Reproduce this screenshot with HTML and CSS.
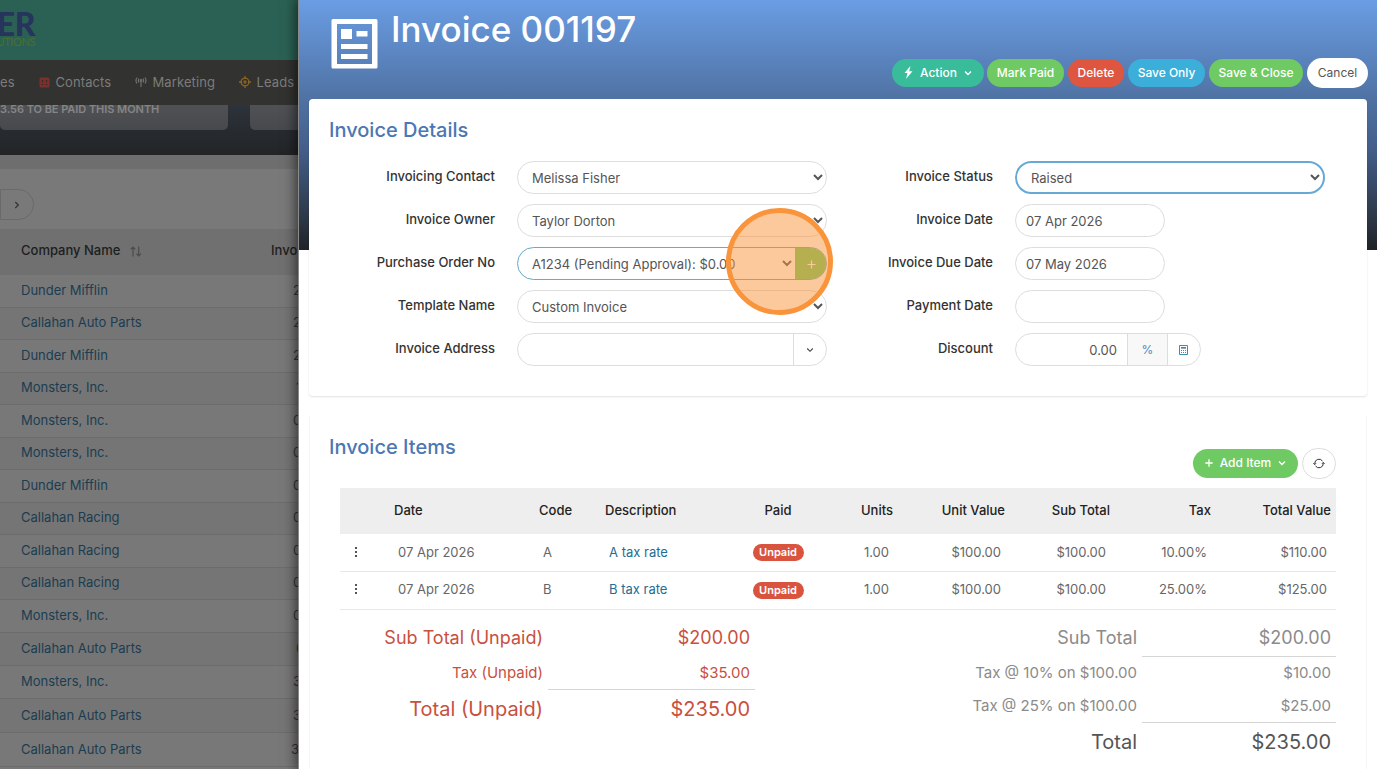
FILE: index.html
```html
<!DOCTYPE html>
<html lang="en">
<head>
    <meta charset="utf-8">
    <title>Invoice 001197</title>
    <meta name="viewport" content="width=device-width, initial-scale=1">
    <link rel="stylesheet" href="styles.css">
</head>
<body>
    <div class="page">
        <header class="brand">
            <div class="logo">ER</div>
            <div class="logo-sub">UTIONS</div>
        </header>
        <nav class="nav">
            <span class="nav-item sales">es</span>
            <span class="nav-item contacts">
                <svg width="11" height="11" viewBox="0 0 11 11"><rect x="0.5" y="0.5" width="10" height="10" rx="1.5" fill="#7c302b"/><path d="M3.5 3v2.2M7.5 3v2.2M2.5 7.5h2M6.5 7.5h2" stroke="#3a2a28" stroke-width="1.2"/></svg>
                Contacts
            </span>
            <span class="nav-item marketing">
                <svg width="12" height="12" viewBox="0 0 12 12" fill="none" stroke="#707070" stroke-width="1.2"><path d="M2 1.5Q0 4.5 2 7.5M4 2.5Q2.8 4.5 4 6.5M10 1.5Q12 4.5 10 7.5M8 2.5Q9.2 4.5 8 6.5M6 5v6"/><circle cx="6" cy="4.5" r="0.8"/></svg>
                Marketing
            </span>
            <span class="nav-item leads">
                <svg width="12" height="12" viewBox="0 0 12 12" fill="none" stroke="#8a6420" stroke-width="1.3"><circle cx="6" cy="6" r="3.9"/><circle cx="6" cy="6" r="1"/><path d="M6 0v3M6 9v3M0 6h3M9 6h3"/></svg>
                Leads
            </span>
        </nav>
        <section class="stats">
            <div class="stat">3.56 TO BE PAID THIS MONTH</div>
            <div class="stat"></div>
        </section>
        <div class="gap"></div>
        <div class="pager"><span class="pager-next"><svg width="6" height="8" viewBox="0 0 6 8" fill="none" stroke="#333" stroke-width="1.2"><path d="M1.3 1l3 3-3 3"/></svg></span></div>
        <div class="list">
            <div class="list-head">
                <span>Company Name <svg width="12" height="11" viewBox="0 0 12 11" fill="none" stroke="#4c4c4c" stroke-width="1.2"><path d="M3 10.5V1M.7 3.3L3 1l2.3 2.3M8.7 .5V10M6.4 7.7L8.7 10 11 7.7"/></svg></span>
                <span class="inv-head">Invo</span>
            </div>
            <div class="list-row"><a>Dunder Mifflin</a><span>2</span></div>
            <div class="list-row"><a>Callahan Auto Parts</a><span>2</span></div>
            <div class="list-row"><a>Dunder Mifflin</a><span>2</span></div>
            <div class="list-row"><a>Monsters, Inc.</a><span class="far">1</span></div>
            <div class="list-row"><a>Monsters, Inc.</a><span>0</span></div>
            <div class="list-row"><a>Monsters, Inc.</a><span>0</span></div>
            <div class="list-row"><a>Dunder Mifflin</a><span>0</span></div>
            <div class="list-row"><a>Callahan Racing</a><span>0</span></div>
            <div class="list-row"><a>Callahan Racing</a><span>0</span></div>
            <div class="list-row"><a>Callahan Racing</a><span>0</span></div>
            <div class="list-row tall"><a>Monsters, Inc.</a><span>0</span></div>
            <div class="list-row tall"><a>Callahan Auto Parts</a><span class="far">0</span></div>
            <div class="list-row tall"><a>Monsters, Inc.</a><span>3</span></div>
            <div class="list-row taller"><a>Callahan Auto Parts</a><span>3</span></div>
            <div class="list-row taller"><a>Callahan Auto Parts</a><span class="near">3</span></div>
        </div>
    </div>

    <main class="drawer">
        <header class="drawer-head">
            <svg class="doc-icon" width="47" height="51" viewBox="0 0 47 51"><path fill="#fff" fill-rule="evenodd" d="M2 1h43a1.5 1.5 0 0 1 1.5 1.5v46.500a1.500 1.500 0 0 1-1.500 1.500H2A1.500 1.500 0 0 1 .5 49V2.500A1.500 1.500 0 0 1 2 1zM6 6v40h35V6zM10 11h11v10H10zM25.500 13H36.500v5.500H25.500zM10 26h26.500v5H10zM10 36h26.500v5H10z"/></svg>
            <h1>Invoice 001197</h1>
            <div class="buttons">
                <button class="btn teal">
                    <svg width="9" height="13" viewBox="0 0 9 13"><path fill="#fff" d="M6.500 0L.5 7h3L2 13l6.500-7.700H5.200z"/></svg>
                    Action
                    <svg class="caret" width="8" height="6" viewBox="0 0 8 6" fill="none" stroke="#fff" stroke-width="1.4"><path d="M1 1.500l3 3 3-3"/></svg>
                </button>
                <button class="btn green">Mark Paid</button>
                <button class="btn red">Delete</button>
                <button class="btn blue">Save Only</button>
                <button class="btn green close">Save &amp; Close</button>
                <button class="btn white">Cancel</button>
            </div>
        </header>

        <section class="panel details">
            <h2>Invoice Details</h2>
            <div class="form">
                <div class="col">
                    <div class="field"><label>Invoicing Contact</label><select><option>Melissa Fisher</option></select></div>
                    <div class="field"><label>Invoice Owner</label><select><option>Taylor Dorton</option></select></div>
                    <div class="field">
                        <label>Purchase Order No</label>
                        <div class="group order">
                            <select><option>A1234 (Pending Approval): $0.00</option></select>
                            <button class="add"><svg width="9" height="9" viewBox="0 0 9 9" stroke="#fff" stroke-width="1.2"><path d="M4.500 .5v8M.5 4.500h8"/></svg></button>
                        </div>
                        <div class="click-marker"></div>
                    </div>
                    <div class="field"><label>Template Name</label><select><option>Custom Invoice</option></select></div>
                    <div class="field">
                        <label>Invoice Address</label>
                        <div class="group address">
                            <input type="text">
                            <span class="addon"><svg width="8" height="6" viewBox="0 0 8 6" fill="none" stroke="#444" stroke-width="1.1"><path d="M1.200 1.500L4 4.300l2.800-2.800"/></svg></span>
                        </div>
                    </div>
                </div>
                <div class="col">
                    <div class="field"><label>Invoice Status</label><select class="focused"><option>Raised</option></select></div>
                    <div class="field"><label>Invoice Date</label><input class="date" type="text" value="07 Apr 2026"></div>
                    <div class="field"><label>Invoice Due Date</label><input class="date" type="text" value="07 May 2026"></div>
                    <div class="field"><label>Payment Date</label><input class="date" type="text"></div>
                    <div class="field">
                        <label>Discount</label>
                        <div class="group discount">
                            <input type="text" value="0.00">
                            <span class="percent">%</span>
                            <span class="addon"><svg width="9" height="10" viewBox="0 0 9 10" fill="none" stroke="#3a8cba"><path d="M.5.5h8v9h-8zM2 2.500h5M2 3.200h5"/><path stroke-dasharray="1 1" d="M2 5.500h5M2 7.500h5"/></svg></span>
                        </div>
                    </div>
                </div>
            </div>
        </section>

        <section class="panel items">
            <h2>Invoice Items</h2>
            <div class="items-actions">
                <button class="btn green add-item">
                    <svg width="8" height="8" viewBox="0 0 8 8" stroke="#fff" stroke-width="1.3"><path d="M4 .3v7.400M.3 4h7.400"/></svg>
                    Add Item
                    <svg class="caret" width="8" height="6" viewBox="0 0 8 6" fill="none" stroke="#fff" stroke-width="1.3"><path d="M1 1.500l3 3 3-3"/></svg>
                </button>
                <button class="refresh"><svg width="12" height="11" viewBox="0 0 12 11" fill="none" stroke="#333" stroke-width="1"><path d="M1.700 6.300V5.500a4.300 4.300 0 0 1 7.800-2.500M10.300 4.700v.8a4.300 4.300 0 0 1-7.800 2.500"/><path d="M.4 5.200l1.300 1.400L3 5.200M9 5.800l1.300-1.400 1.300 1.400"/></svg></button>
            </div>
            <div class="table">
                <div class="tr th"><span></span><span>Date</span><span>Code</span><span>Description</span><span class="c">Paid</span><span class="r">Units</span><span class="r">Unit Value</span><span class="r">Sub Total</span><span class="r">Tax</span><span class="r">Total Value</span></div>
                <div class="tr"><span class="dots"><i></i><i></i><i></i></span><span>07 Apr 2026</span><span>A</span><span><a>A tax rate</a></span><span class="c"><b class="badge">Unpaid</b></span><span class="r">1.00</span><span class="r">$100.00</span><span class="r">$100.00</span><span class="r">10.00%</span><span class="r">$110.00</span></div>
                <div class="tr second"><span class="dots"><i></i><i></i><i></i></span><span>07 Apr 2026</span><span>B</span><span><a>B tax rate</a></span><span class="c"><b class="badge">Unpaid</b></span><span class="r">1.00</span><span class="r">$100.00</span><span class="r">$100.00</span><span class="r">25.00%</span><span class="r">$125.00</span></div>
            </div>
            <div class="totals">
                <div class="sum unpaid">
                    <div class="line sub"><span>Sub Total (Unpaid)</span><span>$200.00</span></div>
                    <div class="line tax ruled"><span>Tax (Unpaid)</span><span>$35.00</span></div>
                    <div class="line total"><span>Total (Unpaid)</span><span>$235.00</span></div>
                </div>
                <div class="sum all">
                    <div class="line sub ruled"><span>Sub Total</span><span>$200.00</span></div>
                    <div class="line tax"><span>Tax @ 10% on $100.00</span><span>$10.00</span></div>
                    <div class="line tax ruled"><span>Tax @ 25% on $100.00</span><span>$25.00</span></div>
                    <div class="line total"><span>Total</span><span>$235.00</span></div>
                </div>
            </div>
        </section>
    </main>
</body>
</html>
```
FILE: styles.css
```css
* {
    box-sizing: border-box;
}

body {
    margin: 0;
    height: 769px;
    display: flex;
    overflow: hidden;
    font-family: Inter, "Liberation Sans", sans-serif;
    font-size: 13px;
    color: #555;
    background-color: #fff;
}

button, input, select {
    font-family: inherit;
    font-size: 13px;
}

svg {
    flex: none;
}

/* dimmed list page on the left */
.page {
    width: 298px;
    flex: none;
    overflow: hidden;
    background-color: #787878;
}

.brand {
    height: 60px;
    padding-top: 11px;
    background-color: #2b6154;
}

.logo {
    font-family: Lato, sans-serif;
    font-size: 32px;
    font-weight: 900;
    line-height: 25px;
    letter-spacing: -0.5px;
    width: 35px;
    color: #27345c;
    display: flex;
    justify-content: flex-end;
}

.logo-sub {
    font-family: Lato, sans-serif;
    font-size: 11px;
    line-height: 11px;
    letter-spacing: -0.4px;
    width: 35px;
    color: #4a6f31;
    display: flex;
    justify-content: flex-end;
}

.nav {
    height: 45px;
    display: flex;
    align-items: center;
    padding-bottom: 1px;
    background-color: #323230;
    color: #7c7c7b;
    letter-spacing: 0.1px;
    white-space: nowrap;
}

.nav-item {
    display: flex;
    align-items: center;
    gap: 6px;
}

.sales {
    width: 38.5px;
}

.contacts {
    width: 96px;
}

.marketing {
    width: 104px;
}

.stats {
    height: 50px;
    display: flex;
    gap: 22px;
    background-image: linear-gradient(#2d333b, #222427);
}

.stat {
    width: 228px;
    flex: none;
    height: 25px;
    border-radius: 0 0 5px 5px;
    background-image: linear-gradient(#505155, #48494d);
    color: #858585;
    font-size: 11px;
    font-weight: 600;
    line-height: 9px;
    letter-spacing: -0.05px;
}

.gap {
    height: 14px;
    background-color: #6e6e6e;
}

.pager {
    height: 60px;
    padding-top: 20px;
    background-color: #797979;
}

.pager-next {
    width: 34px;
    height: 31px;
    display: flex;
    align-items: center;
    justify-content: center;
    border: 1px solid #6a6a6a;
    border-radius: 0 16px 16px 0;
}

.list-head, .list-row {
    display: grid;
    grid-template-columns: 272px 60px;
    padding-left: 21px;
    align-items: center;
    white-space: nowrap;
}

.list-head {
    height: 46px;
    padding-bottom: 4px;
    background-color: #707070;
    color: #1d1e20;
    font-weight: 500;
}

.list-head svg {
    margin-left: 6px;
    vertical-align: -2px;
}

.inv-head {
    margin-left: -22px;
}

.list-row {
    height: 32.5px;
    padding-bottom: 2px;
    border-bottom: 1px solid #6c6c6c;
    color: #333;
}

.list-row:nth-child(odd) {
    background-color: #757575;
}

.list-row a {
    color: #1b3d51;
}

.list-row.tall {
    height: 33px;
}

.list-row.taller {
    height: 34px;
}

.far {
    margin-left: 3px;
}

.near {
    margin-left: -2px;
}

/* invoice drawer */
.drawer {
    flex: 1;
    min-width: 0;
    position: relative;
    border-left: 1px solid #8b8b8b;
    padding: 0 10px;
    background: #fff linear-gradient(#6a9de4, #4f72a3 99px, #435e88 150px, #2f3b4d 212px, #202327 250px) no-repeat 0 0 / 100% 250px;
    box-shadow: 0 0 12px 2px rgba(0, 0, 0, 0.6);
}

.drawer-head {
    height: 99px;
    display: flex;
    align-items: flex-start;
}

.doc-icon {
    margin: 18px 0 0 22px;
}

h1 {
    margin: 7px 0 0 13px;
    font-size: 35px;
    font-weight: 500;
    line-height: 44px;
    color: #fff;
    white-space: nowrap;
}

.buttons {
    display: flex;
    align-items: center;
    gap: 4px;
    margin: 58px -1px 0 auto;
}

.btn {
    height: 28px;
    display: flex;
    align-items: center;
    justify-content: center;
    padding: 0 0 1px;
    border: none;
    border-radius: 15px;
    color: #fff;
    font-size: 12px;
    font-weight: 500;
    white-space: nowrap;
}

.teal {
    width: 92px;
    gap: 7px;
    margin-right: -1px;
    background-color: #38bc9a;
}

.green {
    width: 77px;
    background-color: #70ca63;
}

.close {
    width: 94px;
}

.red {
    width: 56px;
    background-color: #df5640;
}

.blue {
    width: 77px;
    background-color: #3bafda;
}

.white {
    width: 61px;
    height: 30px;
    background-color: #fff;
    color: #555;
    font-weight: 400;
}

.panel {
    padding: 0 20px;
    border: 1px solid #f6f6f6;
    background-color: #fff;
}

h2 {
    margin: 0;
    font-size: 20px;
    font-weight: 500;
    line-height: 24px;
    color: #4c77b3;
}

.details {
    height: 297px;
    padding-top: 19px;
    border: none;
    border-radius: 4px;
    box-shadow: 0 1px 2px rgba(0, 0, 0, 0.12);
}

.form {
    display: flex;
    margin-top: 19px;
}

.col {
    display: flex;
    flex-direction: column;
    gap: 10px;
}

.field {
    display: flex;
    gap: 22px;
    position: relative;
    width: 498px;
    height: 33px;
}

label {
    width: 166px;
    text-align: right;
    line-height: 30px;
    font-weight: 500;
    color: #333;
}

select, .date, .group {
    height: 33px;
    border: 1px solid #ddd;
    border-radius: 17px;
    background-color: #fff;
    color: #555;
}

select {
    width: 310px;
    padding: 0 0 0 10px;
}

select.focused {
    border: 2px solid #67a9d6;
    padding-left: 10px;
}

.date {
    width: 150px;
    padding: 0 10px;
}

.group {
    width: 310px;
    display: flex;
    overflow: hidden;
}

.group select, .group input {
    flex: 1;
    min-width: 0;
    height: 31px;
    border: none;
    border-radius: 0;
    background-color: transparent;
    color: #555;
}

.order {
    border-color: #67a9c8;
}

.add {
    width: 32px;
    height: 33px;
    margin: -1px -1px 0 0;
    padding: 0;
    border: none;
    background-color: #70ca63;
}

.addon, .percent {
    width: 33px;
    display: flex;
    align-items: center;
    justify-content: center;
    border-left: 1px solid #ddd;
}

.discount {
    width: 186px;
}

.discount input {
    text-align: right;
    padding: 0 10px;
}

.discount .addon {
    padding-right: 2px;
}

.percent {
    width: 40px;
    font-size: 12px;
    background-color: #f8f8f8;
    color: #4a89c8;
}

/* highlight over the add button */
.click-marker {
    position: absolute;
    left: 397px;
    top: -39px;
    width: 107px;
    height: 107px;
    border: 5px solid #f9943b;
    border-radius: 50%;
    background-color: rgba(249, 148, 59, 0.5);
    z-index: 1;
}

.items {
    height: 353px;
    margin-top: 20px;
    padding: 19px 30px 0 19px;
    border-top: none;
    border-bottom: none;
}

.items-actions {
    display: flex;
    justify-content: flex-end;
    align-items: center;
    gap: 4px;
    height: 31px;
    margin-top: -11px;
}

.add-item {
    width: 105px;
    height: 29px;
    gap: 7px;
    padding-bottom: 2px;
}

.refresh {
    width: 34px;
    height: 31px;
    display: flex;
    align-items: center;
    justify-content: center;
    padding: 0;
    border: 1px solid #ddd;
    border-radius: 16px;
    background-color: #fff;
}

.table {
    margin: 9px 0 0 11px;
}

.tr {
    display: grid;
    grid-template-columns: 49px 145px 66px 140px 76px 82px 112px 105px 101px 120px;
    height: 38px;
    align-items: center;
    border-bottom: 1px solid #e8e8e8;
    color: #666;
}

.tr span {
    padding: 0 9px 1px;
}

.tr .c {
    padding: 0 0 1px;
    text-align: center;
}

.tr .r {
    text-align: right;
}

.tr.second span {
    padding-bottom: 3px;
}

.tr.second .c {
    padding-bottom: 1px;
}

.tr.th {
    height: 46px;
    border: none;
    background-color: #eee;
    color: #222;
    font-weight: 500;
}

.tr.th span {
    padding: 0 5px 2px;
}

.tr a {
    color: #226d93;
}

.tr .dots {
    display: flex;
    flex-direction: column;
    gap: 2px;
    padding-left: 15px;
}

.dots i {
    width: 2px;
    height: 2px;
    background-color: #555;
}

.badge {
    display: inline-block;
    width: 51px;
    height: 17px;
    border-radius: 9px;
    background-color: #d9543f;
    color: #fff;
    font-size: 11px;
    font-weight: 600;
    line-height: 17px;
}

.totals {
    display: flex;
    justify-content: space-between;
    padding: 9px 0 0 11px;
}

.line {
    display: grid;
    grid-template-columns: 208px 207px;
    text-align: right;
}

.line span {
    padding-right: 5px;
}

.ruled span + span {
    border-bottom: 1px solid #d5d5d5;
}

.line.sub {
    height: 38px;
    line-height: 37px;
    font-size: 18px;
}

.line.tax {
    height: 33px;
    line-height: 32px;
    font-size: 15px;
}

.line.total {
    height: 39px;
    line-height: 39px;
    font-size: 20px;
}

.unpaid {
    color: #c9503e;
}

.unpaid .line.tax {
    line-height: 31px;
}

.all .line {
    grid-template-columns: 208px 194px;
    color: #8b8b8b;
}

.all .line.total {
    color: #555;
}
```
